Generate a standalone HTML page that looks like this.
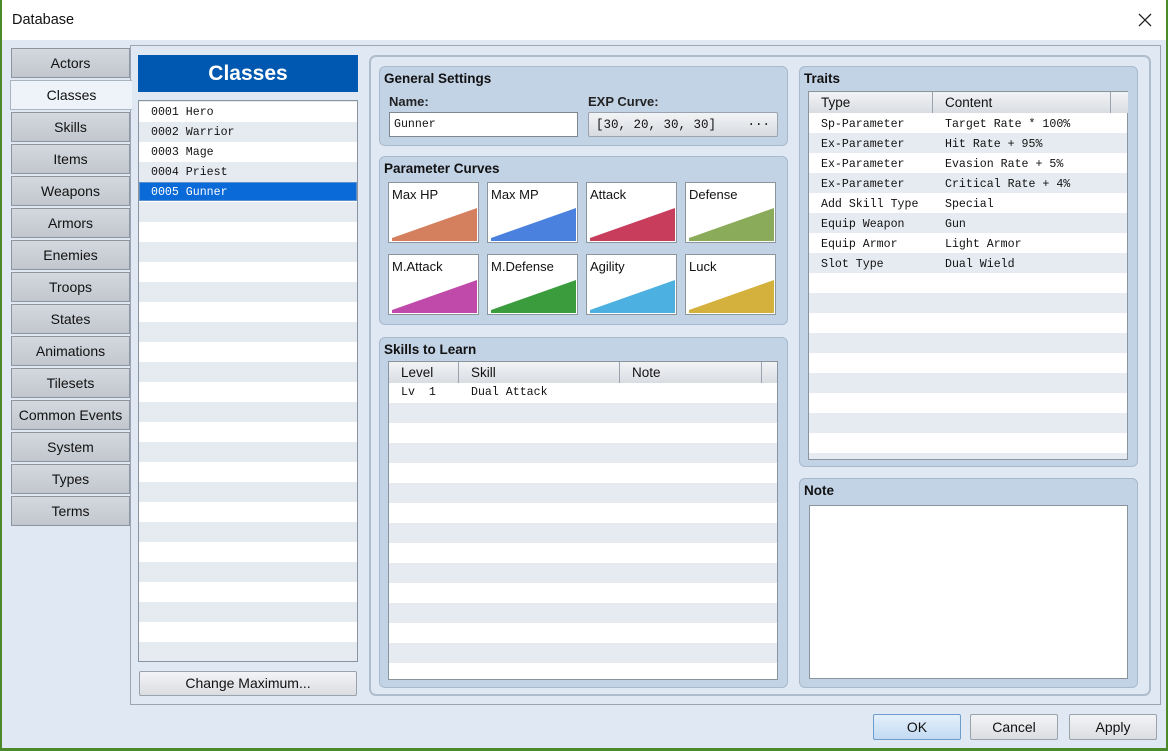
<!DOCTYPE html>
<html><head><style>
*{box-sizing:border-box;margin:0;padding:0}
body{width:1168px;height:751px;overflow:hidden;background:#4a8a2a;font-family:"Liberation Sans","DejaVu Sans",sans-serif;position:relative}
.a{position:absolute}
.win{left:2px;top:0;width:1164px;height:748px;background:#dfe8f3}
.title{left:2px;top:0;width:1164px;height:40px;background:#fff}
.tab{position:absolute;left:11px;width:119px;height:30px;background:linear-gradient(#d4d8de,#c2c7ce);border:1px solid #8e959e;text-align:center;font-size:14px;line-height:29px;color:#111}
.tab.sel{left:10px;width:122px;background:#eef3f9;border-color:#aab4c0;border-right:none}
.grp{position:absolute;background:#c3d3e6;border:1px solid #a9b9cc;border-radius:6px}
.gt{position:absolute;left:4px;top:4px;font-weight:bold;font-size:13.5px;color:#111}
.mono{font-family:"Liberation Mono","DejaVu Sans Mono",monospace;font-size:11.6px;color:#111}
.stripe{background:repeating-linear-gradient(#fff 0 20px,#e6ebf1 20px 40px)}
.th{position:absolute;top:0;height:21px;border-right:1px solid #9aa3ad;background:linear-gradient(#f2f3f5,#d9dde2);font-size:13.5px;padding-left:12px;line-height:21px;color:#111}
.tile{position:absolute;width:91px;height:61px;background:#fff;border:1px solid #8c949c}
.tile span{position:absolute;left:3px;top:4px;font-size:13px;color:#111}
.tile svg{position:absolute;left:1px;bottom:1px}
.btn{position:absolute;height:26px;border:1px solid #9aa2ab;border-radius:2px;background:linear-gradient(#f3f4f6,#dadde1);text-align:center;font-size:14px;line-height:24px;color:#111}
</style></head><body>
<div class="a win"></div>
<div class="a title"></div>
<div class="a" style="left:12px;top:12px;font-size:14.5px;color:#111">Database</div>
<svg class="a" style="left:1138px;top:13px" width="14" height="14"><path d="M1 1L13 13M13 1L1 13" stroke="#222" stroke-width="1.3"/></svg>
<div class="a" style="left:130px;top:45px;width:1031px;height:660px;border:1px solid #9aa6b4;background:#dfe8f3"></div>

<div class="tab" style="top:48px">Actors</div>
<div class="tab sel" style="top:80px">Classes</div>
<div class="tab" style="top:112px">Skills</div>
<div class="tab" style="top:144px">Items</div>
<div class="tab" style="top:176px">Weapons</div>
<div class="tab" style="top:208px">Armors</div>
<div class="tab" style="top:240px">Enemies</div>
<div class="tab" style="top:272px">Troops</div>
<div class="tab" style="top:304px">States</div>
<div class="tab" style="top:336px">Animations</div>
<div class="tab" style="top:368px">Tilesets</div>
<div class="tab" style="top:400px">Common Events</div>
<div class="tab" style="top:432px">System</div>
<div class="tab" style="top:464px">Types</div>
<div class="tab" style="top:496px">Terms</div>

<div class="a" style="left:138px;top:55px;width:220px;height:37px;background:#0058b0;color:#fff;font-weight:bold;font-size:21px;text-align:center;line-height:37px">Classes</div>
<div class="a stripe" style="left:138px;top:100px;width:220px;height:562px;border:1px solid #8a949e;background-position:0 1px"></div>
<div class="a mono" style="left:139px;top:182px;width:218px;height:19px;background:#0a6ad8;border:1px solid #5a8fcf"></div>
<div class="a mono" style="left:151px;top:103px;line-height:20px">0001 Hero<br>0002 Warrior<br>0003 Mage<br>0004 Priest<br><span style="color:#fff">0005 Gunner</span></div>
<div class="btn" style="left:139px;top:671px;width:218px;height:25px;line-height:23px">Change Maximum...</div>

<div class="a" style="left:369px;top:55px;width:782px;height:641px;border:2px solid #aebccc;border-radius:7px;background:#dfe8f3"></div>

<div class="grp" style="left:379px;top:66px;width:409px;height:80px"><div class="gt">General Settings</div>
<div class="a" style="left:9px;top:27px;font-size:13px;font-weight:bold;color:#222">Name:</div>
<div class="a" style="left:208px;top:27px;font-size:13px;font-weight:bold;color:#222">EXP Curve:</div>
<div class="a mono" style="left:9px;top:45px;width:189px;height:25px;background:#fff;border:1px solid #7f8790;padding:5px 0 0 4px">Gunner</div>
<div class="a mono" style="left:208px;top:45px;width:190px;height:25px;background:linear-gradient(#f3f4f6,#d7dbe0);border:1px solid #9aa2ab;border-radius:2px;padding:5px 0 0 7px;font-size:12.5px">[30, 20, 30, 30]<span style="position:absolute;right:7px;top:2px">...</span></div>
</div>

<div class="grp" style="left:379px;top:156px;width:409px;height:169px"><div class="gt">Parameter Curves</div></div>
<div class="tile" style="left:388px;top:182px"><span>Max HP</span><svg width="87" height="33"><polygon points="2,30 87,0 87,33 2,33" fill="#d4805e"/></svg></div>
<div class="tile" style="left:487px;top:182px"><span>Max MP</span><svg width="87" height="33"><polygon points="2,30 87,0 87,33 2,33" fill="#4a80de"/></svg></div>
<div class="tile" style="left:586px;top:182px"><span>Attack</span><svg width="87" height="33"><polygon points="2,30 87,0 87,33 2,33" fill="#c83c5c"/></svg></div>
<div class="tile" style="left:685px;top:182px"><span>Defense</span><svg width="87" height="33"><polygon points="2,30 87,0 87,33 2,33" fill="#8aac5a"/></svg></div>
<div class="tile" style="left:388px;top:254px"><span>M.Attack</span><svg width="87" height="33"><polygon points="2,30 87,0 87,33 2,33" fill="#c04aaa"/></svg></div>
<div class="tile" style="left:487px;top:254px"><span>M.Defense</span><svg width="87" height="33"><polygon points="2,30 87,0 87,33 2,33" fill="#3a9c3c"/></svg></div>
<div class="tile" style="left:586px;top:254px"><span>Agility</span><svg width="87" height="33"><polygon points="2,30 87,0 87,33 2,33" fill="#4cb0e0"/></svg></div>
<div class="tile" style="left:685px;top:254px"><span>Luck</span><svg width="87" height="33"><polygon points="2,30 87,0 87,33 2,33" fill="#d4b03c"/></svg></div>

<div class="grp" style="left:379px;top:337px;width:409px;height:351px"><div class="gt">Skills to Learn</div></div>
<div class="a stripe" style="left:388px;top:361px;width:390px;height:319px;border:1px solid #8a949e;background-position:0 21px">
<div class="th" style="left:0;width:70px">Level</div>
<div class="th" style="left:70px;width:161px">Skill</div>
<div class="th" style="left:231px;width:142px">Note</div>
<div class="th" style="left:373px;width:15px;border-right:none"></div>
<div class="a mono" style="left:12px;top:24px">Lv&nbsp;&nbsp;1</div>
<div class="a mono" style="left:82px;top:24px">Dual Attack</div>
</div>

<div class="grp" style="left:799px;top:66px;width:339px;height:401px"><div class="gt">Traits</div></div>
<div class="a stripe" style="left:808px;top:91px;width:320px;height:369px;border:1px solid #8a949e;background-position:0 21px">
<div class="th" style="left:0;width:124px">Type</div>
<div class="th" style="left:124px;width:178px">Content</div>
<div class="th" style="left:302px;width:17px;border-right:none"></div>
<div class="a mono" style="left:12px;top:23px;line-height:20px">Sp-Parameter<br>Ex-Parameter<br>Ex-Parameter<br>Ex-Parameter<br>Add Skill Type<br>Equip Weapon<br>Equip Armor<br>Slot Type</div>
<div class="a mono" style="left:136px;top:23px;line-height:20px">Target Rate * 100%<br>Hit Rate + 95%<br>Evasion Rate + 5%<br>Critical Rate + 4%<br>Special<br>Gun<br>Light Armor<br>Dual Wield</div>
</div>

<div class="grp" style="left:799px;top:478px;width:339px;height:210px"><div class="gt">Note</div></div>
<div class="a" style="left:809px;top:505px;width:319px;height:174px;background:#fff;border:1px solid #8a949e"></div>

<div class="btn" style="left:873px;top:714px;width:88px;background:linear-gradient(#e4effb,#c2daf2);border-color:#6e9ccc">OK</div>
<div class="btn" style="left:970px;top:714px;width:88px">Cancel</div>
<div class="btn" style="left:1069px;top:714px;width:88px">Apply</div>
</body></html>
